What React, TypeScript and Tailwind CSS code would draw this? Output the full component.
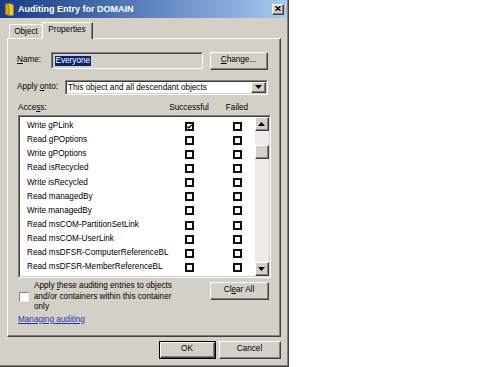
import React from "react";

type P = { className?: string; inner?: string; children?: React.ReactNode };

function Raised({ className = "", inner = "", children }: P) {
  return (
    <div
      className={`border border-t-white border-l-white border-r-[#404040] border-b-[#404040] bg-[#d4d0c8] ${className}`}
    >
      <div
        className={`w-full h-full border-r border-b border-r-[#808080] border-b-[#808080] flex items-center justify-center ${inner}`}
      >
        {children}
      </div>
    </div>
  );
}

function Sunken({ className = "", inner = "", children }: P) {
  return (
    <div
      className={`border border-t-[#808080] border-l-[#808080] border-r-white border-b-white ${className}`}
    >
      <div
        className={`w-full h-full border border-t-[#404040] border-l-[#404040] border-r-[#d4d0c8] border-b-[#d4d0c8] ${inner}`}
      >
        {children}
      </div>
    </div>
  );
}

function Box({ checked = false }: { checked?: boolean }) {
  return (
    <div className="w-[9px] h-[9px] border-2 border-[#111] bg-white flex items-center justify-center">
      {checked && (
        <svg width="5" height="5" viewBox="0 0 5 5">
          <path d="M0.4 2.4 L1.8 3.9 L4.6 0.9" fill="none" stroke="#000" strokeWidth="1.3" />
        </svg>
      )}
    </div>
  );
}

function UpTri() {
  return (
    <svg width="7" height="4" viewBox="0 0 7 4">
      <path d="M3.5 0 L7 4 L0 4 Z" fill="#000" />
    </svg>
  );
}
function DownTri() {
  return (
    <svg width="7" height="4" viewBox="0 0 7 4">
      <path d="M0 0 L7 0 L3.5 4 Z" fill="#000" />
    </svg>
  );
}

const rows = [
  "Write gPLink",
  "Read gPOptions",
  "Write gPOptions",
  "Read isRecycled",
  "Write isRecycled",
  "Read managedBy",
  "Write managedBy",
  "Read msCOM-PartitionSetLink",
  "Read msCOM-UserLink",
  "Read msDFSR-ComputerReferenceBL",
  "Read msDFSR-MemberReferenceBL",
  "Read msDS-AllowedToActOnBehalfOfOtherIdentity",
];

export default function App() {
  return (
    <div className="w-[482px] h-[367px] bg-white overflow-hidden font-['Liberation_Sans',Arial,sans-serif] text-[8.2px] text-black">
      <div className="w-[289px] h-[367px] border-r border-b border-r-[#404040] border-b-[#404040]">
        <div className="w-full h-full border-r border-b border-r-[#808080] border-b-[#808080] bg-[#d4d0c8] flex flex-col">
          {/* Title bar */}
          <div className="h-[18px] shrink-0 flex items-center bg-linear-to-r from-[#163a86] to-[#a6caf0]">
            <svg className="ml-[5px]" width="9" height="13" viewBox="0 0 9 13">
              <path d="M0.5 1 L5 0.5 L8.5 2 L8.5 12.5 L4 12.5 L0.5 11 Z" fill="#f4c63d" stroke="#9a7414" strokeWidth="0.8" />
              <path d="M0.5 1 L4 2.5 L4 12.5 L0.5 11 Z" fill="#d9a21f" stroke="#9a7414" strokeWidth="0.8" />
            </svg>
            <span className="ml-[4px] text-white font-bold text-[9px] leading-[18px] whitespace-nowrap">
              Auditing Entry for DOMAIN
            </span>
            <Raised className="ml-auto mr-[3px] w-[12px] h-[11px]">
              <svg width="6" height="5" viewBox="0 0 6 5">
                <path d="M0.5 0.3 L5.5 4.7 M5.5 0.3 L0.5 4.7" stroke="#000" strokeWidth="1.4" />
              </svg>
            </Raised>
          </div>

          {/* Tabs */}
          <div className="h-[20px] shrink-0 flex items-end pl-[9px]">
            <div className="w-[34px] h-[14px] border-t border-l border-r border-t-white border-l-white border-r-[#404040] rounded-tl-[2px] flex items-center justify-center leading-[12px]">
              Object
            </div>
            <div className="relative z-10 -ml-px -mb-px w-[51px] h-[17px] bg-[#d4d0c8] border-t border-l border-r border-t-white border-l-white border-r-[#404040] rounded-tl-[2px]">
              <div className="h-full border-r border-r-[#808080] flex items-center justify-center pb-[3px] leading-[12px]">
                Properties
              </div>
            </div>
          </div>

          {/* Panel */}
          <div className="ml-[7px] w-[274px] h-[299px] shrink-0 border border-t-white border-l-white border-r-[#404040] border-b-[#404040]">
            <div className="h-full border-r border-b border-r-[#808080] border-b-[#808080] pl-[10px] pr-[8px] flex flex-col">
              {/* Name row */}
              <div className="mt-[13px] h-[18px] flex items-start">
                <div className="w-[34px] h-[17px] flex items-center -ml-px">
                  <span className="underline">N</span>ame:
                </div>
                <Sunken className="w-[152px] h-[17px]" inner="bg-[#d4d0c8] flex items-center pl-[2px]">
                  <span className="bg-[#0a246a] text-white leading-[10px] px-[0.5px]">Everyone</span>
                </Sunken>
                <Raised className="ml-[7px] w-[58px] h-[18px]">
                  <span>
                    <span className="underline">C</span>hange...
                  </span>
                </Raised>
              </div>

              {/* Apply onto row */}
              <div className="mt-[10px] h-[15px] flex items-center">
                <div className="w-[48px] -ml-px whitespace-nowrap">
                  Apply <span className="underline">o</span>nto:
                </div>
                <Sunken className="w-[203px] h-[15px]" inner="bg-white flex items-center">
                  <span className="pl-[1px] flex-1 whitespace-nowrap leading-[11px]">
                    This object and all descendant objects
                  </span>
                  <Raised className="w-[15px] h-full">
                    <DownTri />
                  </Raised>
                </Sunken>
              </div>

              {/* Header */}
              <div className="h-[20px] pt-[6px] flex leading-[14px] pr-[16px]">
                <div className="flex-1">
                  Acce<span className="underline">s</span>s:
                </div>
                <div className="w-[48px] text-center">Successful</div>
                <div className="w-[6px]" />
                <div className="w-[36px] text-center">Failed</div>
              </div>

              {/* List */}
              <Sunken className="w-[253px] h-[163px]" inner="bg-white flex overflow-hidden">
                <div className="flex-1 pt-[2px] overflow-hidden">
                  {rows.map((r, i) => (
                    <div key={r} className="h-[14.15px] flex items-center">
                      <div className="flex-1 min-w-0 pl-[7px] whitespace-nowrap overflow-visible leading-[14px]">{r}</div>
                      <div className="w-[48px] shrink-0 flex justify-center">
                        <Box checked={i === 0} />
                      </div>
                      <div className="w-[6px] shrink-0" />
                      <div className="w-[36px] shrink-0 flex justify-center">
                        <Box />
                      </div>
                    </div>
                  ))}
                </div>
                <div className="w-[14px] h-full flex flex-col bg-[#ecebe7]">
                  <Raised className="w-[14px] h-[14px] shrink-0">
                    <UpTri />
                  </Raised>
                  <Raised className="mt-[14px] w-[14px] h-[14px] shrink-0" />
                  <div className="flex-1" />
                  <Raised className="w-[14px] h-[14px] shrink-0">
                    <DownTri />
                  </Raised>
                </div>
              </Sunken>

              {/* Bottom row */}
              <div className="mt-[3px] flex items-start">
                <div className="flex items-center">
                  <div className="ml-[1px] w-[10px] h-[10px] border border-t-[#808080] border-l-[#808080] border-r-[#e8e8e8] border-b-[#e8e8e8] bg-white" />
                  <div className="ml-[5px] leading-[10.5px] whitespace-nowrap">
                    Apply <span className="underline">t</span>hese auditing entries to objects
                    <br />
                    and/or containers within this container
                    <br />
                    only
                  </div>
                </div>
                <Raised className="ml-auto mr-[2px] mt-[1px] w-[59px] h-[18px]">
                  <span>
                    Cl<span className="underline">e</span>ar All
                  </span>
                </Raised>
              </div>

              {/* Link */}
              <div className="mt-[1px] leading-[11px]">
                <span className="text-[#1c3aa9] underline">Managing auditing</span>
              </div>
            </div>
          </div>

          {/* OK / Cancel */}
          <div className="mt-[4px] flex ml-[159px]">
            <div className="w-[57px] h-[18px] border border-black">
              <Raised className="w-full h-full">OK</Raised>
            </div>
            <Raised className="ml-[3px] w-[62px] h-[18px]">Cancel</Raised>
          </div>
        </div>
      </div>
    </div>
  );
}
